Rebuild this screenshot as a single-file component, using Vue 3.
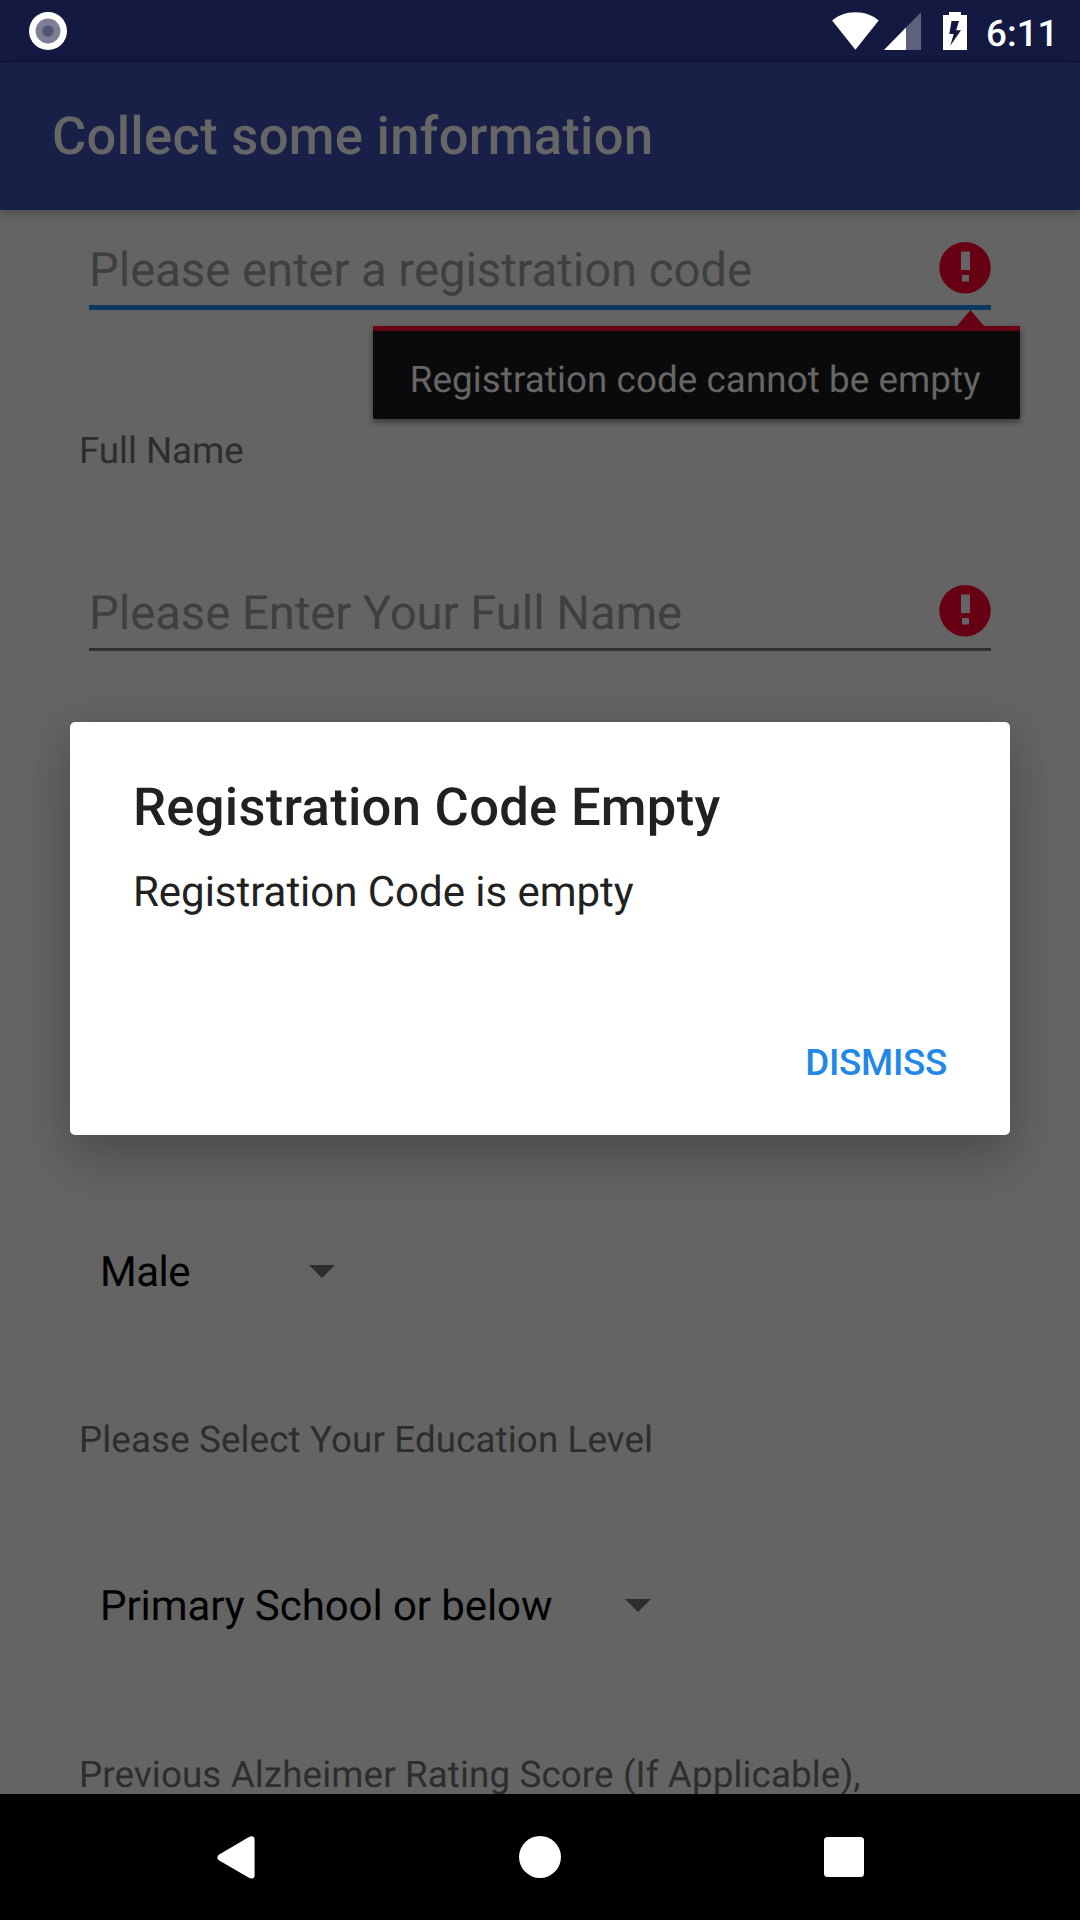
<script setup>
const registrationError = 'Registration code cannot be empty'
</script>

<template>
  <div class="screen">
    <header class="status-bar">
      <svg class="record" width="40" height="40" viewBox="0 0 40 40">
        <circle cx="20" cy="20" r="19" fill="#fff" />
        <circle cx="20" cy="20" r="12.4" fill="#7d7e96" />
        <circle cx="20" cy="20" r="5.7" fill="#505374" />
      </svg>
      <div class="indicators">
        <svg class="wifi" width="47" height="38" viewBox="0 0 47 38">
          <path d="M23.4 37.8 0.1 8.6C6 3.4 14 .3 23.4 .3S41 3.4 46.7 8.6Z" fill="#fff" />
        </svg>
        <svg class="signal" width="37" height="38" viewBox="0 0 37 38">
          <path d="M37 .3V38H0Z" fill="#5e607d" />
          <path d="M22 15.6V38H0Z" fill="#fff" />
        </svg>
        <svg class="battery" width="24" height="38" viewBox="0 0 24 38">
          <path fill-rule="evenodd" fill="#fff" d="M6 0h12v3h6v35H0V3h6ZM8.5 9 6.3 22h4.4L7.3 33.8 18 18.3h-4.8L16 9Z" />
        </svg>
        <span class="clock">6:11</span>
      </div>
    </header>

    <div class="app-bar"><h1>Collect some information</h1></div>

    <main class="form">
      <div class="field focused">
        <span class="hint">Please enter a registration code</span>
        <svg class="error-icon" width="52" height="52" viewBox="0 0 52 52">
          <path fill-rule="evenodd" fill="#660012" d="M26 0a25.7 25.7 0 1 1 0 51.4A25.7 25.7 0 0 1 26 0ZM22 9.6V28h9V9.6ZM23 33v6.6h7V33Z" />
        </svg>
        <div class="error-popup">
          <svg class="pointer" width="27" height="16" viewBox="0 0 27 16"><path d="M13.5 0 27 16H0Z" fill="#660012" /></svg>
          <span>{{ registrationError }}</span>
        </div>
      </div>

      <div class="label name-label">Full Name</div>
      <div class="field name-field">
        <span class="hint">Please Enter Your Full Name</span>
        <svg class="error-icon" width="52" height="52" viewBox="0 0 52 52">
          <path fill-rule="evenodd" fill="#660012" d="M26 0a25.7 25.7 0 1 1 0 51.4A25.7 25.7 0 0 1 26 0ZM22 9.6V28h9V9.6ZM23 33v6.6h7V33Z" />
        </svg>
      </div>

      <div class="spinner gender">
        <span>Male</span>
        <svg width="26" height="13" viewBox="0 0 26 13"><path d="M0 0h26L13 13Z" fill="#2d2d2d" /></svg>
      </div>
      <div class="label education-label">Please Select Your Education Level</div>
      <div class="spinner education">
        <span>Primary School or below</span>
        <svg width="26" height="13" viewBox="0 0 26 13"><path d="M0 0h26L13 13Z" fill="#2d2d2d" /></svg>
      </div>
      <div class="label score-label">Previous Alzheimer Rating Score (If Applicable),</div>
    </main>

    <nav class="nav-bar">
      <svg width="38" height="43" viewBox="0 0 38 43"><path d="M3.5 17.8 31.5 1.2Q37.6-1.5 37.6 4V39Q37.6 44.3 31.5 41.6L1.8 24.3Q-1.2 21.5 1.8 18.7Z" fill="#fff" /></svg>
      <svg width="42" height="42" viewBox="0 0 42 42"><circle cx="21" cy="21" r="21" fill="#fff" /></svg>
      <svg width="40" height="40" viewBox="0 0 40 40"><rect width="40" height="40" rx="3.5" fill="#fff" /></svg>
    </nav>

    <section class="dialog">
      <h2>Registration Code Empty</h2>
      <p>Registration Code is empty</p>
      <button>DISMISS</button>
    </section>
  </div>
</template>

<style>
body {
  margin: 0;
  overflow: hidden;
}
</style>

<style scoped>
.screen {
  position: relative;
  display: flex;
  flex-direction: column;
  width: 1080px;
  height: 1920px;
  overflow: hidden;
  background: #646464;
  font-family: Roboto, sans-serif;
  text-rendering: geometricPrecision;
  white-space: nowrap;
}
svg {
  display: block;
  flex: none;
}
.status-bar {
  flex: none;
  display: flex;
  justify-content: space-between;
  box-sizing: border-box;
  height: 63px;
  padding: 0 24.4px 0 27.5px;
  background: #131940;
}
.record {
  margin-top: 11.3px;
}
.indicators {
  display: flex;
  align-items: flex-start;
}
.indicators svg {
  margin-top: 12px;
}
.signal {
  margin-left: 5px;
}
.battery {
  margin-left: 22px;
}
.clock {
  width: 69.5px;
  margin-left: 19px;
  color: #fff;
  font-size: 36.75px;
  font-weight: 500;
  line-height: 67px;
}
.app-bar {
  position: relative;
  z-index: 1;
  flex: none;
  height: 147px;
  padding-left: 52px;
  background: #192048;
  box-shadow: 0 3px 10px rgba(0, 0, 0, 0.28);
}
h1 {
  margin: 0;
  color: #666;
  font-size: 52.5px;
  font-weight: 500;
  letter-spacing: 0.31px;
  line-height: 146px;
}
.form {
  flex: none;
  display: flex;
  flex-direction: column;
  height: 1584px;
  overflow: hidden;
}
.form > * {
  flex: none;
}
.field {
  position: relative;
  display: flex;
  justify-content: space-between;
  height: 65px;
  margin: 30px 89px 0;
  border-bottom: 3px solid #303030;
}
.field.focused {
  border-bottom: 5px solid #0d3860;
}
.hint {
  color: #3f3f3f;
  font-size: 47.25px;
  letter-spacing: -0.045px;
  line-height: 60px;
}
.error-icon {
  margin: 1.7px 0.5px 0 0;
}
.error-popup {
  position: absolute;
  top: 86px;
  left: 284.4px;
  box-sizing: border-box;
  width: 647px;
  height: 93px;
  padding-left: 36.4px;
  border-top: 5px solid #660012;
  border-radius: 0 0 2px 2px;
  background: #0a0a0a;
  box-shadow: 0 3px 6px rgba(0, 0, 0, 0.45);
  color: #666;
  font-size: 36.75px;
  letter-spacing: 0.08px;
  line-height: 97px;
}
.pointer {
  position: absolute;
  top: -21px;
  left: 583.5px;
}
.label {
  padding-left: 79px;
  color: #2d2d2d;
  font-size: 36.75px;
  letter-spacing: 0.12px;
  line-height: 50px;
}
.name-label {
  margin-top: 116px;
  letter-spacing: -0.05px;
}
.name-field {
  margin-top: 107px;
}
.spinner {
  display: flex;
  align-items: center;
  justify-content: space-between;
  height: 60px;
  margin-left: 100px;
  color: #000;
  font-size: 42px;
  letter-spacing: -0.08px;
  line-height: 60px;
}
.spinner svg {
  margin-bottom: 3px;
}
.gender {
  width: 234.5px;
  margin-top: 592px;
}
.gender span {
  letter-spacing: -0.5px;
}
.education-label {
  margin-top: 112px;
}
.education {
  width: 550.5px;
  margin-top: 112px;
}
.score-label {
  margin-top: 113px;
}
.nav-bar {
  flex: none;
  display: flex;
  align-items: center;
  justify-content: space-between;
  box-sizing: border-box;
  height: 126px;
  padding: 0 216px 0 217px;
  background: #000;
}
.dialog {
  position: absolute;
  z-index: 2;
  top: 722px;
  left: 70px;
  display: flex;
  flex-direction: column;
  box-sizing: border-box;
  width: 940px;
  height: 413px;
  padding: 50px 63px 0;
  border-radius: 5px;
  background: #fff;
  box-shadow: 0 27px 52px rgba(0, 0, 0, 0.2), 0 0 40px rgba(0, 0, 0, 0.09);
  color: #212121;
}
h2 {
  margin: 0;
  font-size: 52.5px;
  font-weight: 500;
  letter-spacing: 0.3px;
  line-height: 70px;
}
p {
  margin: 21px 0 0;
  font-size: 42px;
  letter-spacing: -0.03px;
  line-height: 60px;
}
button {
  align-self: flex-end;
  margin: 112px 0 0;
  padding: 0;
  border: 0;
  background: none;
  color: #2188e8;
  font: 500 36.75px/55px Roboto, sans-serif;
  letter-spacing: -0.27px;
}
</style>
